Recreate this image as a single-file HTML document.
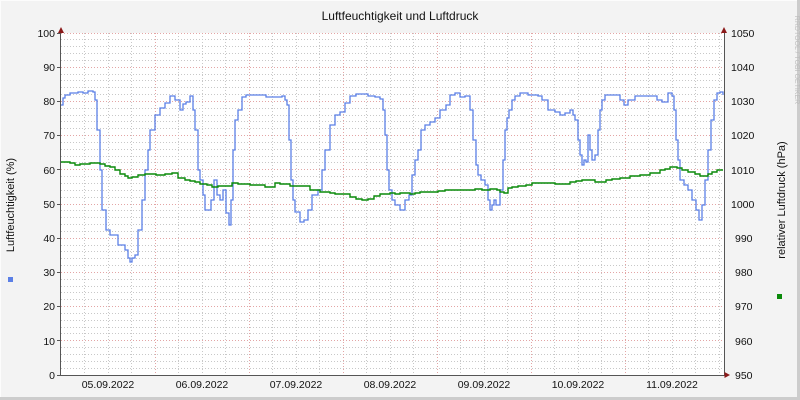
<!DOCTYPE html>
<html><head><meta charset="utf-8"><style>
html,body{margin:0;padding:0;background:#f3f3f3;}
svg{display:block;font-family:"Liberation Sans","DejaVu Sans",sans-serif;}
</style></head><body>
<svg width="800" height="400" viewBox="0 0 800 400" xmlns="http://www.w3.org/2000/svg">
<rect x="0" y="0" width="800" height="400" fill="#f3f3f3"/>
<path d="M0.5 399.5V0.5H799.5" stroke="#fcfcfc" fill="none"/>
<path d="M0 398.5H798.5V0" stroke="#cccccc" stroke-width="3" fill="none"/>
<rect x="61" y="33" width="663" height="342" fill="#ffffff"/>
<g id="grid" stroke-dasharray="1,2" stroke-width="1" shape-rendering="crispEdges">
<g stroke="#c8c8c8">
<path d="M61 368.5H724M61 361.5H724M61 354.5H724M61 347.5H724M61 333.5H724M61 327.5H724M61 320.5H724M61 313.5H724M61 299.5H724M61 292.5H724M61 286.5H724M61 279.5H724M61 265.5H724M61 258.5H724M61 251.5H724M61 245.5H724M61 231.5H724M61 224.5H724M61 217.5H724M61 210.5H724M61 197.5H724M61 190.5H724M61 183.5H724M61 176.5H724M61 162.5H724M61 156.5H724M61 149.5H724M61 142.5H724M61 128.5H724M61 121.5H724M61 115.5H724M61 108.5H724M61 94.5H724M61 87.5H724M61 80.5H724M61 74.5H724M61 60.5H724M61 53.5H724M61 46.5H724M61 39.5H724"/>
<path d="M84.5 33V375M108.5 33V375M131.5 33V375M178.5 33V375M202.5 33V375M225.5 33V375M272.5 33V375M296.5 33V375M319.5 33V375M366.5 33V375M390.5 33V375M413.5 33V375M460.5 33V375M484.5 33V375M507.5 33V375M554.5 33V375M578.5 33V375M601.5 33V375M648.5 33V375M672.5 33V375M695.5 33V375M719.5 33V375"/>
</g>
<g stroke="#e3a5a5">
<path d="M61 340.5H724M61 306.5H724M61 272.5H724M61 238.5H724M61 204.5H724M61 169.5H724M61 135.5H724M61 101.5H724M61 67.5H724M61 33.5H724"/>
<path d="M155.5 33V375M249.5 33V375M343.5 33V375M437.5 33V375M531.5 33V375M625.5 33V375"/>
</g>
</g>
<polyline class="step" fill="none" stroke="#5b7fe6" stroke-width="1.3" points="61,105 63,98 65,95 70,93 78,92 83,93 88,91 93,92 95,100 97,130 100,170 102,210 106,230 110,235 118,245 125,250 128,258 130,262 132,258 135,255 138,230 142,200 145,170 148,150 150,130 155,115 160,108 165,103 170,96 175,100 180,110 183,104 186,102 190,96 193,110 195,130 198,170 200,180 203,195 205,210 208,210 211,200 214,180 217,195 220,200 223,190 226,213 229,225 231,200 233,150 235,120 238,110 242,97 246,95 262,95 266,97 272,97 282,96 285,100 287,105 289,140 291,180 293,200 295,212 300,222 304,220 308,210 312,195 318,190 322,170 325,150 330,125 335,115 340,112 345,103 350,96 356,94 368,96 375,97 380,99 383,110 385,135 387,170 389,190 392,200 395,205 400,210 405,200 409,195 412,175 415,160 418,150 421,130 425,125 430,122 435,118 440,110 446,105 450,95 455,93 460,97 465,96 470,110 473,140 476,165 478,175 481,180 485,185 488,200 490,210 492,205 494,200 496,205 498,205 500,190 503,160 505,130 507,118 509,110 512,100 515,96 520,93 528,95 538,96 542,100 548,110 555,112 560,115 565,113 570,110 573,115 575,120 578,140 580,155 582,165 584,160 586,162 588,135 590,150 592,160 595,155 598,130 600,110 602,100 605,95 615,95 620,100 624,105 628,100 635,96 652,96 657,100 662,102 668,93 672,96 674,110 676,140 678,160 680,180 684,185 688,190 692,200 696,210 699,220 702,205 705,180 708,150 711,120 714,100 717,93 720,92 723,95"/>
<polyline class="step" fill="none" stroke="#0a8a0a" stroke-width="1.4" points="61,162 70,163 75,165 80,164 90,163 100,164 105,166 110,167 115,170 120,174 125,176 128,178 132,177 138,175 145,174 150,174 156,175 165,174 170,174 172,173 178,178 185,180 190,181 195,182 200,184 207,185 212,187 218,186 225,186 232,183 238,184 250,185 258,185 265,187 270,187 275,183 280,184 290,186 300,186 310,190 320,192 330,193 335,194 345,194 350,197 356,199 362,200 368,199 374,196 380,194 390,193 395,194 400,193 410,194 415,193 420,192 430,192 438,191 445,190 452,190 460,190 468,190 475,189 482,190 490,189 497,190 500,192 504,193 508,188 512,187 518,186 526,185 532,183 540,183 548,183 555,184 560,184 570,182 576,181 582,180 590,180 595,182 600,182 606,180 612,179 620,178 630,176 640,175 650,173 660,170 665,169 670,167 677,168 682,170 688,172 695,174 700,176 705,176 708,174 712,172 717,170 723,170"/>
<path d="M60.5 33V375.5H724.5V33" stroke="#555" stroke-width="1" fill="none" shape-rendering="crispEdges"/>
<polygon points="58,33 64,33 61,27" fill="#8b1a1a"/>
<polygon points="721,33 727,33 724,27" fill="#8b1a1a"/>
<polygon points="724.5,372 724.5,378 730,375" fill="#8b1a1a"/>
<g stroke="#555" shape-rendering="crispEdges"><path d="M57 33.5H61M57 67.5H61M57 101.5H61M57 135.5H61M57 169.5H61M57 204.5H61M57 238.5H61M57 272.5H61M57 306.5H61M57 340.5H61M57 375.5H61"/></g>
<text x="400" y="20" font-size="12" text-anchor="middle" fill="#111">Luftfeuchtigkeit und Luftdruck</text>
<g font-size="10.5" fill="#111" text-anchor="end">
<text x="55" y="37">100</text><text x="55" y="71">90</text><text x="55" y="105">80</text><text x="55" y="139">70</text><text x="55" y="174">60</text><text x="55" y="208">50</text><text x="55" y="242">40</text><text x="55" y="276">30</text><text x="55" y="310">20</text><text x="55" y="345">10</text><text x="55" y="379">0</text>
</g>
<g font-size="10.5" fill="#111">
<text x="731" y="37">1050</text><text x="731" y="71">1040</text><text x="731" y="105">1030</text><text x="731" y="139">1020</text><text x="731" y="174">1010</text><text x="731" y="208">1000</text><text x="735" y="242">990</text><text x="735" y="276">980</text><text x="735" y="310">970</text><text x="735" y="345">960</text><text x="735" y="379">950</text>
</g>
<g font-size="10.5" fill="#111" text-anchor="middle">
<text x="108" y="388">05.09.2022</text><text x="202" y="388">06.09.2022</text><text x="296" y="388">07.09.2022</text><text x="390" y="388">08.09.2022</text><text x="484" y="388">09.09.2022</text><text x="578" y="388">10.09.2022</text><text x="672" y="388">11.09.2022</text>
</g>
<text transform="translate(14,205) rotate(-90)" font-size="11" text-anchor="middle" fill="#111">Luftfeuchtigkeit (%)</text>
<text transform="translate(785,200) rotate(-90)" font-size="11" text-anchor="middle" fill="#111">relativer Luftdruck (hPa)</text>
<text transform="translate(795,60) rotate(90)" font-size="7" text-anchor="middle" fill="#bbbbbb">RRDTOOL / TOBI OETIKER</text>
<rect x="8" y="277" width="5" height="5" fill="#5b7fe6"/>
<rect x="777" y="294" width="5" height="5" fill="#0a8a0a"/>
</svg>
<script>
document.querySelectorAll('polyline.step').forEach(function(p){
  var pts=p.getAttribute('points').trim().split(/\s+/).map(function(s){return s.split(',').map(Number);});
  var out=[pts[0]];
  for(var i=1;i<pts.length;i++){out.push([pts[i][0],pts[i-1][1]]);out.push(pts[i]);}
  p.setAttribute('points',out.map(function(a){return a[0]+','+a[1];}).join(' '));
});
</script>
</body></html>
